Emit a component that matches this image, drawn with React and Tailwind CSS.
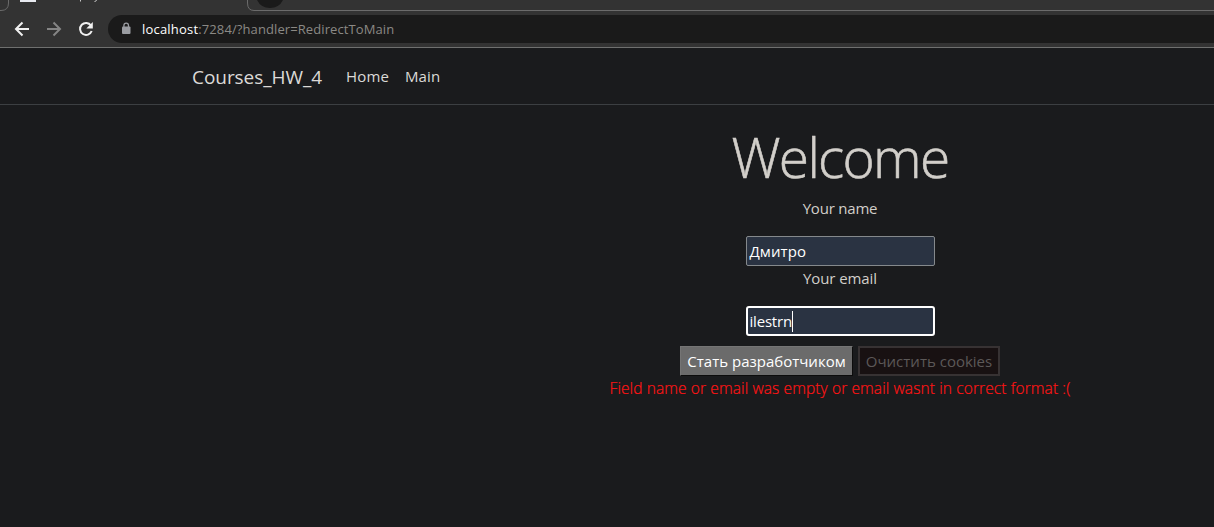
import React from "react";

function BrowserChrome() {
  return (
    <header className="h-12 flex flex-col bg-[#333333] border-b border-[#6f706f]">
      <div className="h-[11px] flex shrink-0">
        <svg className="w-[320px] h-[11px] shrink-0" viewBox="0 0 320 11" fill="none">
          <path d="M0 10.500H1Q8.500 10.500 8.500 3V0" stroke="#6b6b6b" />
          <rect x="20" y="0" width="16" height="2" fill="#e8eaf0" />
          <path d="M80.500 0v1.500M96.500 0q-.3 1.500-2 1.500" stroke="#c8c8c8" />
          <path d="M247.500 0V3Q247.500 10.500 254 10.500H320" stroke="#6b6b6b" />
          <path d="M257 0Q261 8 270 8T283 0Z" fill="#1a1a1a" />
        </svg>
        <div className="flex-1 border-b border-[#6b6b6b]" />
      </div>
      <div className="flex-1 flex items-center">
        <svg className="w-[108px] h-9 shrink-0" viewBox="0 0 108 36" fill="none">
          <path d="M29 18H16M22.500 11.500L16 18l6.500 6.500" stroke="#f1f1f1" strokeWidth="2" />
          <path d="M47 18h13M53.500 11.500L60 18l-6.500 6.500" stroke="#858585" strokeWidth="2" />
          <path d="M91 14.500A6 6 0 1 0 91.700 20" stroke="#f1f1f1" strokeWidth="2" />
          <path d="M92.800 11v6.500H86.300Z" fill="#f1f1f1" />
        </svg>
        <div className="flex-1 h-7 rounded-l-full bg-[#1a1a1a] flex items-center">
          <svg className="w-[34px] h-7" viewBox="0 0 34 28" fill="none">
            <rect x="14" y="11.500" width="8.500" height="7.500" rx="1" fill="#9a9ca1" />
            <path d="M15.900 12V10.500a2.300 2.300 0 0 1 4.600 0V12" stroke="#9a9ca1" strokeWidth="1.300" />
          </svg>
          <span className="text-[13px] leading-5 tracking-[0.1px] whitespace-pre text-[#8b8985]"><span className="text-white tracking-[0.2px]">localhost</span>:7284/?handler=RedirectToMain</span>
        </div>
      </div>
    </header>
  );
}

function NavBar() {
  return (
    <nav className="h-[57px] pl-[192px] flex items-center border-b border-[#3c3f42] text-[#dcdad7] whitespace-nowrap">
      <a className="w-[154px] pt-[2px] text-[19px] leading-[30px] tracking-[-0.05px]">Courses_HW_4</a>
      <a className="w-[59px] text-[15px] leading-6 tracking-[0.15px]">Home</a>
      <a className="text-[15px] leading-6 tracking-[0.1px]">Main</a>
    </nav>
  );
}

export default function App() {
  return (
    <div className="w-[1214px] h-[527px] overflow-hidden bg-[#1a1b1d] font-['Open_Sans','Noto_Sans',sans-serif]">
      <BrowserChrome />
      <NavBar />
      <main className="pt-[18px] ml-[466px] w-[748px] flex flex-col items-center text-[15px] leading-6 text-[#d2cfca] whitespace-nowrap">
        <h1 className="text-[55px] leading-[67px] mb-[6px] font-light tracking-[-1.7px] [-webkit-text-stroke:0.6px_#d2cfca]">Welcome</h1>
        <p className="mb-4 tracking-[-0.2px]">Your name</p>
        <div className="w-[189px] h-[30px] border border-[#85898c] rounded-[2px] bg-[#2a3342] px-[3px] flex items-center text-white tracking-[0.1px]">Дмитро</div>
        <p className="mb-4 tracking-[-0.1px]">Your email</p>
        <div className="w-[189px] h-[30px] border-2 border-white rounded-[3px] bg-[#2a3342] px-[2px] flex items-center text-white tracking-[-0.2px]">
          ilestrn<span className="w-px h-[21px] bg-white" />
        </div>
        <div className="flex gap-[5px] mt-[10px]">
          <button className="w-[173px] h-[30px] bg-[#6b6b6b] border border-t-[#757575] border-l-[#757575] border-r-[#0c0c0c] border-b-[#0c0c0c] text-white">Стать разработчиком</button>
          <button className="w-[142px] h-[30px] bg-[#181112] border-2 border-[#373233] text-[#5c5858]">Очистить cookies</button>
        </div>
        <p className="font-light text-[15.5px] tracking-[0.11px] text-[#ff1414] [-webkit-text-stroke:0.2px_#ff1414]">Field name or email was empty or email wasnt in correct format :(</p>
      </main>
    </div>
  );
}
